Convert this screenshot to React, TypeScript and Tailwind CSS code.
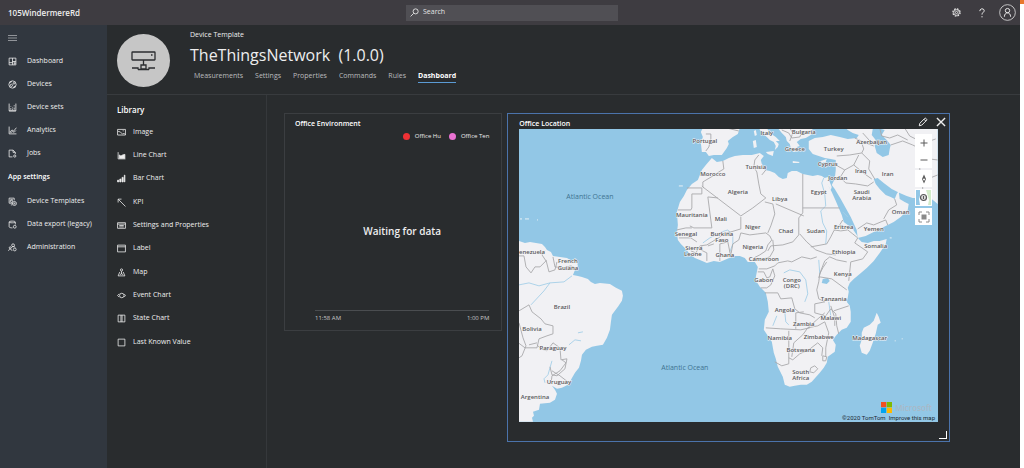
import type { ReactNode } from "react";

const ICONS: Record<string, ReactNode> = {
  dashboard: <path d="M2 2h12v12H2zM8 2v12M2 10h6M8 8h6M11 8v6M11 11h3" />,
  devices: (
    <>
      <circle cx="8" cy="8" r="6.5" />
      <circle cx="6" cy="9.5" r="2" />
      <circle cx="10.5" cy="6" r="1.5" />
      <path d="M3 5l4-2.5M9 13.5l4-3" />
    </>
  ),
  sets: <path d="M2 1v13h12V1M2 14h12M5 12V9M8 12v-2M11 12V8M5 6v1M8 7v1M11 4v2" />,
  analytics: <path d="M2 1v13h13M3 11l4-4 3 2 5-6M4 12l4-2 3 1 3-3" />,
  jobs: (
    <>
      <path d="M8 14H2V2h7l4 4v3M9 2v4h4" />
      <circle cx="12" cy="12.5" r="2" />
    </>
  ),
  templates: (
    <>
      <path d="M9 11H2V2h9v4M5 14h3M4 5h5" />
      <circle cx="6" cy="7.5" r="2" />
      <circle cx="11.5" cy="11.5" r="3.5" />
      <circle cx="11.5" cy="11.5" r="1" />
    </>
  ),
  dataExport: (
    <>
      <path d="M8 14c-3 0-6-.6-6-2V3.500c0-2 11-2 11 0V8M2 3.500c0 2 11 2 11 0" />
      <circle cx="12" cy="12" r="2.500" />
    </>
  ),
  admin: (
    <>
      <circle cx="9" cy="4" r="2.500" />
      <circle cx="4" cy="8.500" r="1.800" />
      <circle cx="12" cy="11.500" r="2.500" />
      <path d="M1 14c0-4 6-4 6 0M6 8c1-2 6-2 7 0" />
    </>
  ),
  image: <path d="M1 2.500h14v10H1zM2 6l4 1 4 4 2-2 3 3M10 5h2" />,
  line: (
    <>
      <path d="M2 2v12h13" />
      <path d="M4 13V7l3 2 3-2 4-1v7z" fill="currentColor" />
    </>
  ),
  bar: <path d="M1 14v-3h2v3zM5 14v-5h2v5zM9 14V6h2v8zM13 14V2h1v12z" fill="currentColor" />,
  kpi: <path d="M15 15L2 2M2 8V2h6" />,
  properties: <path d="M1 3h14v10H1zM1 5.500h14M4 8h8M4 10.500h8" />,
  label: <path d="M1 2h14v12H1zM1 5h14" />,
  map: (
    <>
      <circle cx="8" cy="3.500" r="2" />
      <path d="M8 5.500V11M5 7l-3 7h12l-3-7M5 12l3-2 3 2" />
    </>
  ),
  event: (
    <>
      <circle cx="8.500" cy="8" r="4" />
      <path d="M4 5L1 8l3 3M13 5.500L15 8l-2 2.500" />
    </>
  ),
  state: <path d="M2 2h12v12H2zM9 2v12M7 2v12" />,
  square: <path d="M2 2h12v12H2z" />,
};

function Icon({ name }: { name: string }) {
  return (
    <svg viewBox="0 0 16 16" className="size-[9px] shrink-0" fill="none" stroke="currentColor" strokeWidth="1.4" aria-hidden="true">
      {ICONS[name]}
    </svg>
  );
}

const NAV = [
  ["dashboard", "Dashboard"],
  ["devices", "Devices"],
  ["sets", "Device sets"],
  ["analytics", "Analytics"],
  ["jobs", "Jobs"],
];

const SETTINGS = [
  ["templates", "Device Templates"],
  ["dataExport", "Data export (legacy)"],
  ["admin", "Administration"],
];

const LIBRARY = [
  ["image", "Image"],
  ["line", "Line Chart"],
  ["bar", "Bar Chart"],
  ["kpi", "KPI"],
  ["properties", "Settings and Properties"],
  ["label", "Label"],
  ["map", "Map"],
  ["event", "Event Chart"],
  ["state", "State Chart"],
  ["square", "Last Known Value"],
];

const TABS = ["Measurements", "Settings", "Properties", "Commands", "Rules"];

function TopBar() {
  return (
    <header className="flex h-[25px] items-center justify-between bg-[#3e3c41] px-1">
      <a href="#" className="flex-1 pl-1 text-[8px] font-semibold">105WindermereRd</a>
      <label className="flex h-4 w-[212px] items-center gap-1 bg-[#504f54] px-1">
        <svg viewBox="0 0 16 16" className="size-[9px]" fill="none" stroke="currentColor" strokeWidth="1.5" aria-hidden="true">
          <circle cx="10" cy="6" r="4.500" />
          <path d="M6.500 9.500L1 15" />
        </svg>
        <input type="search" aria-label="Search" placeholder="Search" className="min-w-0 flex-1 bg-transparent text-[7px] outline-none placeholder:text-[#e4e4e4]" />
      </label>
      <div className="flex flex-1 items-center justify-end">
        <button aria-label="Settings" className="flex w-[26px] justify-center">
          <svg viewBox="0 0 16 16" className="size-[9px]" fill="none" stroke="currentColor" aria-hidden="true">
            <circle cx="8" cy="8" r="6.500" strokeWidth="2" strokeDasharray="3 2.100" />
            <circle cx="8" cy="8" r="5" strokeWidth="1.500" />
            <circle cx="8" cy="8" r="2" strokeWidth="1.500" />
          </svg>
        </button>
        <button aria-label="Help" className="flex w-[26px] justify-center">
          <svg viewBox="0 0 16 16" className="size-[10px]" fill="none" stroke="currentColor" strokeWidth="1.600" aria-hidden="true">
            <path d="M4.500 5c0-5 7-4.500 7-.8C11.500 7 8 7 8 10.500M8 13v2" />
          </svg>
        </button>
        <button aria-label="Account" className="pl-1">
          <svg viewBox="0 0 18 18" className="size-[17px]" fill="none" stroke="currentColor" aria-hidden="true">
            <circle cx="9" cy="9" r="8.300" strokeWidth="0.800" />
            <circle cx="9" cy="7" r="2.300" />
            <path d="M5.700 13.500c0-5.500 6.600-5.500 6.600 0" />
          </svg>
        </button>
      </div>
    </header>
  );
}

function NavItem({ icon, text }: { icon: string; text: string }) {
  return (
    <a href="#" className="flex h-[23px] items-center gap-[10px] whitespace-nowrap">
      <Icon name={icon} />
      {text}
    </a>
  );
}

function Sidebar() {
  return (
    <nav className="w-[107px] shrink-0 bg-[#31373f] pl-2">
      <button aria-label="Menu" className="flex h-[25px] w-full items-center">
        <svg viewBox="0 0 9 6" className="w-[9px]" stroke="#a9acb0" strokeWidth="0.800" aria-hidden="true">
          <path d="M0 .5h9M0 3h9M0 5.500h9" />
        </svg>
      </button>
      {NAV.map(([icon, text]) => (
        <NavItem key={text} icon={icon} text={text} />
      ))}
      <div className="flex h-[25px] items-center font-semibold text-white">App settings</div>
      {SETTINGS.map(([icon, text]) => (
        <NavItem key={text} icon={icon} text={text} />
      ))}
    </nav>
  );
}

function TemplateHeader() {
  return (
    <div className="flex h-[70px] gap-[20px] border-b border-[#383b3e] pt-[9px] pl-[10px]">
      <div className="flex size-[53px] shrink-0 items-center justify-center rounded-full bg-[#c6c6c6]">
        <svg viewBox="0 0 25 20" className="w-[25px]" fill="none" stroke="#2b2d30" strokeWidth="1.300" aria-hidden="true">
          <rect x="1" y="1" width="23" height="8" rx="0.500" />
          <path d="M20 4h1.500M12.500 9v5M10 14h5v4h-5zM7 18.500h11M1 17h6v1.500M18 18.500V17h6" />
        </svg>
      </div>
      <div>
        <div className="text-[7px] leading-[10px] -mt-1">Device Template</div>
        <h1 className="pt-1 text-[16px] leading-[22px] whitespace-pre">TheThingsNetwork  (1.0.0)</h1>
        <div className="flex gap-3 pt-[5px] pl-1 text-[7px] leading-[10px] text-[#bcbdbf]">
          {TABS.map((tab) => (
            <a key={tab} href="#">{tab}</a>
          ))}
          <a href="#" className="border-b border-[#5b9bd5] pb-px font-bold text-white">Dashboard</a>
        </div>
      </div>
    </div>
  );
}

function Library() {
  return (
    <aside className="w-40 shrink-0 border-r border-[#35383b] pt-[9px] pl-[10px]">
      <h2 className="text-[8px] leading-[12px] font-semibold text-white">Library</h2>
      <ul className="pt-1">
        {LIBRARY.map(([icon, text]) => (
          <li key={text} className="nth-[3n+1]:pt-px">
            <button className="flex h-[23px] items-center gap-[7px]">
              <Icon name={icon} />
              {text}
            </button>
          </li>
        ))}
      </ul>
    </aside>
  );
}

function EnvironmentCard() {
  return (
    <section className="flex h-[218px] flex-col border border-[#3b3e41] pt-[5px] pr-3 pb-[7px] pl-[10px]">
      <h3 className="text-[7px] leading-[10px] font-semibold text-white">Office Environment</h3>
      <div className="flex justify-end gap-2 pt-[2px] text-[6px] leading-[10px]">
        <span className="flex items-center gap-[5px]">
          <span className="size-[7px] rounded-full bg-[#ee3135]" />
          <span className="whitespace-nowrap">Office Hu</span>
        </span>
        <span className="flex items-center gap-[5px]">
          <span className="size-[7px] rounded-full bg-[#ea72d2]" />
          <span className="whitespace-nowrap">Office Ten</span>
        </span>
      </div>
      <div className="flex flex-1 items-center justify-center pt-3 pl-5 text-[10px] font-semibold">Waiting for data</div>
      <div className="ml-5 flex justify-between border-t border-[#4a4d50] pt-[3px] text-[6px] leading-[9px] text-[#c6c7c8]">
        <span>11:58 AM</span>
        <span>1:00 PM</span>
      </div>
    </section>
  );
}

const LAND = [
  // South America
  "M519 241L522 242 525 243 530 242 536 243 542 244 545 247 547 250 551 252 553 256 560 257 567 258 572 261 577 262 578 266 575 270 573 275 578 276 582 277 588 279 591 282 595 284 600 283 610 284 616 288 622 291 623 296 622 301 618 307 612 315 611 322 610 330 607 338 603 345 597 346 592 347 586 350 582 355 581 361 579 368 575 373 571 380 568 385 562 388 557 389 552 386 555 390 557 394 555 400 550 403 540 404 539 410 533 412 534 416 532 418 533 422 519 422z",
  // Africa
  "M712 158L717 162 723 161 729 158 735 156 743 155 752 155 760 153 764 156 761 160 762 164 765 170 770 171 775 173 779 177 783 179 787 178 788 173 792 171 797 171 803 174 813 176 818 175 822 176 825 178 828 177 830 182 832 187 831 190 827 183 832 192 836 201 839 208 842 215 844 222 848 225 853 229 857 235 859 239 862 242 868 243 874 241 880 241 887 239 886 244 880 253 874 261 867 268 860 274 854 279 850 283 848 288 849 292 848 298 847 302 850 306 851 312 851 322 847 328 842 330 837 335 833 340 836 345 835 352 828 357 827 363 824 368 820 373 812 382 807 385 801 385 795 386 790 387 785 385 783 377 778 367 776 359 774 353 772 342 768 336 764 330 765 320 769 312 768 302 766 293 760 287 757 282 756 277 758 267 755 262 748 262 745 258 740 256 734 256 727 259 720 262 714 261 707 263 700 260 695 258 690 254 685 248 681 244 678 240 677 233 678 225 677 212 680 202 684 196 687 190 692 184 698 180 702 170 706 165z",
  // Iberia
  "M703 128L701 132 703 137 701 143 702 152 706 152 709 156 714 155 722 155 727 148 729 144 728 141 733 137 738 134 740 128z",
  "M754 131l2-1 1 5-2 1zM753 141l3-1 1 7-3 1z",
  // Italy and Sicily
  "M759 128l3 5 5 4 3 3 4 2 2 4-1 4 3-3 1-3-3-3 4 0-4-4-6-4-3-5zM766 152l8-1-1 5-5-2z",
  // Greece and the Balkans
  "M778 128L782 133 786 137 787 141 790 144 791 148 794 152 798 151 797 147 800 146 797 142 801 139 806 138 811 135 813 128zM793 161l7 1-1 1-6 0z",
  // Turkey, Caucasus, Arabia, Iran
  "M809 141L815 138 823 137 831 135 840 137 848 139 857 138 859 135 853 133 848 130 846 128 938 128 938 204 932 199 922 198 913 198 907 196 900 193 892 189 884 183 878 178 874 179 876 184 880 189 886 195 891 197 895 199 897 194 899 191 900 199 905 202 909 204 908 210 901 217 894 222 886 226 876 231 866 236 858 238 857 230 851 217 846 208 841 199 835 189 832 185 835 179 836 170 836 160 831 159 825 158 819 156 813 154 809 149z",
  // Madagascar
  "M877 313L879 317 881 323 878 325 876 334 873 343 870 351 867 355 862 353 860 346 862 340 862 333 864 328 870 325 874 321z",
  "M821 161l6-2-1 3-4 1z",
];

const BORDERS = [
  // North and West Africa
  "M723 161l1 8-5 3-6 4-10 6 0 5 38 29 12-8 13-10-5-4-2-10-2-12-3-5 1-7 4-5M762 175l4-5M687 188h15v6h-10v14l-1 2h-13M702 186l2 2M718 198l-10-1 4 31h-18l-4-2M741 217l0 12-10 3-6 1-5 4-8 5-5 3-7 1-4 7-5-2M702 246l-1 4 6 3 0 8M714 244l-6 2M720 261l0-17 8-2 3 15M731 255l2-11 6-4M739 240l2-7 9 2 8-1 8-1 4 3 2 4-4 5-2 6-6 4-6 3M765 202l8 2 2 10-4 12-3 7M776 204l28 12M803 174l0 39-4 5v17l-6 7-10 3-12 1-3 5M803 208l37 0M773 240l1 10-4 7-6 2M759 269l8 0 8-3 3-3 10-2 4 1 10-5 9 2 6-2M800 234l7 8 9 8 11 4 9 1M811 247l16-3 4-7 3-6 6-6 3-5M834 230l7 1 7-1 5 4 5 4-3 5 13 9-5 7-12 3-2 19M847 262l-10-2-7-3-5 4-4 10-2 7M677 230l9-2 6 0M679 238l12 0 6 4",
  // Central and Southern Africa
  "M758 272h6l3 6 3-1 3-8 2 7-4 9-4 3-6 0M765 293h13l3 6 11-1 3 11 5 4 10 2 5 3M766 328l15 1 20 1 9-2M789 331l0 33-7 2-7-4M789 358l4 2 7-6 9-4 9-7 5 5-1 8M796 329l0-16 8-1M827 262l-4 6-3 6-1 8-2 8 2 9 6 3-10 2 0 9 11 3 5-7 5 5 1 12 2 8M820 277l12 2 15 11M834 311l15-5M825 313l-8 7-9 8-5 7-9 8-2 14M808 328l10-2 7-4 4 11-3 15 0 9M831 306l4 12 0 8M811 368l4-2 3 3-4 4-4-1zM823 356l4 1-1 4-3 0z",
  // South America
  "M519 256l5 0 2 11 5 6 4-6 5 0 6-6-4-6 3-4M546 260l3 12 6-2 2-8M553 257l2 10 8 1 8-2 4 2M519 311l10-6 3 7 9 7 4 5 8 2 0 8-6 2-8 3-2 9-12 0-8-6M537 345l4 4 6 2 6-8 7 5 1 12 6-1-2 10-8 7-5-1-2-8M519 323l4 15 3 8-4 10-3 2M529 345l8-2M552 371l8 5 9 7M562 360l4 3-6 8-8 5-1 8",
  // Middle East and Europe
  "M837 156l13-1 12-2 2-4-2-6M836 165l9 5 9-5 5-10M845 170l-5 8-6 2M854 165l11 9 7 5M862 153l8 8-1 8 6 10M840 177l6 6 10 1 12 2 6-4M858 229l9-6 7 2 12-5 2 5M895 199l2 6-8 5-5 9M855 138l11 5 8 3M863 133l9 10M891 145l12-4 10 4 8 4 1 12-2 8 3 12 0 14M880 128l2 8 8 2 8-3 10 5M922 158l16 2M923 181l15-6M905 128l5 8 14 7 12-4M706 134l5 0 0 5-2 8-3 4M727 128l12 3M782 130l7 3 3 5 8-1 2-5 11-1M790 128l3 5-3 8",
];

const WATER = [
  "M873 129l5-1 7 2-3 5 5 5 4 5-1 4-1 6-6 2-6-4-2-7 1-6-4-5z",
  "M823 279l5-1 2 3-3 3-5-1z",
];

const RIVERS =
  "M826 244l1-13-4-8-2-12 5-5-1-12-3-11 2-5M703 243l7-5 12-6 6-2 5 6 0 8-3 8M784 273l6-3 10 2 6 8 2 14-3 8M519 285l10-2 10 3 11-3 14-1 8-6M550 283l-6 8-13 14M552 361l-4 14-4 4 1 4M829 302l2 14M777 316l-4 10M785 312l1 10 3 3M569 345l6-5 6 1M578 333l5-1M819 260l1 14M843 212l5 5";

const PLACES: [string, number, number][] = [
  ["Portugal", 705, 143], ["Italy", 767, 135], ["Bulgaria", 804, 134], ["Greece", 795, 151],
  ["Turkey", 834, 151], ["Azerbaijan", 872, 144], ["Tunisia", 756, 169], ["Cyprus", 828, 166],
  ["Morocco", 713, 176], ["Algeria", 738, 194], ["Libya", 780, 201], ["Egypt", 819, 194],
  ["Jordan", 838, 180], ["Iraq", 861, 173], ["Iran", 888, 176], ["Saudi", 862, 194], ["Arabia", 862, 200],
  ["Oman", 901, 214], ["Yemen", 874, 231], ["Mauritania", 692, 217], ["Mali", 721, 221],
  ["Niger", 753, 229], ["Chad", 786, 233], ["Sudan", 816, 233], ["Eritrea", 844, 229],
  ["Senegal", 686, 236], ["Burkina", 722, 236], ["Faso", 722, 242], ["Sierra", 694, 250], ["Leone", 693, 256],
  ["Ghana", 725, 257], ["Nigeria", 753, 249], ["Cameroon", 764, 261], ["Ethiopia", 844, 254],
  ["Somalia", 876, 248], ["Kenya", 843, 276], ["Gabon", 764, 282], ["Congo", 792, 282], ["(DRC)", 792, 288],
  ["Tanzania", 834, 301], ["Angola", 785, 312], ["Malawi", 831, 320], ["Zambia", 804, 326],
  ["Namibia", 780, 340], ["Zimbabwe", 819, 339], ["Botswana", 801, 352], ["Madagascar", 870, 340],
  ["South", 801, 374], ["Africa", 801, 380], ["enezuela", 532, 254], ["French", 568, 263], ["Guiana", 568, 270],
  ["Brazil", 562, 309], ["Bolivia", 532, 331], ["Paraguay", 553, 350], ["Uruguay", 559, 384], ["Argentina", 535, 399],
];

function AfricaMap() {
  return (
    <svg viewBox="519 129 419 293" className="block w-full" role="img" aria-label="Map">
      <rect x="519" y="129" width="419" height="293" fill="#92c7e6" />
      <g fill="#f1f1f4">
        {LAND.map((d) => (
          <path key={d} d={d} />
        ))}
      </g>
      <g fill="#92c7e6">
        {WATER.map((d) => (
          <path key={d} d={d} />
        ))}
      </g>
      <path d={RIVERS} fill="none" stroke="#a5cfe8" strokeWidth="0.900" />
      <g fill="none" stroke="#a9a9ab" strokeWidth="0.900" strokeLinejoin="round">
        {BORDERS.map((d) => (
          <path key={d} d={d} />
        ))}
      </g>
      <path d="M520 219h2M525 219h4M537 220h1M679 186h4M895 341h1M902 339h1M890 238h2" stroke="#e8f1f6" />
      <g className="text-[6px] font-semibold" fill="#58585b" stroke="#f4f4f6" strokeWidth="1" paintOrder="stroke" textAnchor="middle">
        {PLACES.map(([name, x, y]) => (
          <text key={name} x={x} y={y}>{name}</text>
        ))}
      </g>
      <g className="text-[7px]" fill="#3f7391" textAnchor="middle">
        <text x="590" y="199">Atlantic Ocean</text>
        <text x="685" y="370">Atlantic Ocean</text>
      </g>
    </svg>
  );
}

function MapControls() {
  return (
    <div className="absolute top-[5px] right-[6px] flex w-[17px] flex-col gap-[2px] text-[#5a5a5a] *:flex *:h-[17px] *:items-center *:justify-center *:bg-white">
      <button aria-label="Zoom in">
        <svg viewBox="0 0 16 16" className="size-4" fill="none" stroke="currentColor"><path d="M8 4.500v7M4.500 8h7" /></svg>
      </button>
      <button aria-label="Zoom out" className="-mt-[2px]">
        <svg viewBox="0 0 16 16" className="size-4" fill="none" stroke="currentColor"><path d="M4.500 8h7" /></svg>
      </button>
      <button aria-label="Pitch">
        <svg viewBox="0 0 16 16" className="size-4"><path d="M8 3.500L10 8 8 12.500 6 8z" fill="currentColor" /><circle cx="8" cy="8.500" r="1" fill="#fff" /></svg>
      </button>
      <button aria-label="Map style">
        <svg viewBox="0 0 17 17" className="size-[17px]">
          <path d="M1 1h4v6l-1 3 1 6H1z" fill="#92c7e6" />
          <path d="M11 1h5v15h-3l1-5z" fill="#d3ecc9" />
          <circle cx="8.500" cy="8.500" r="3" fill="#dcdcdc" stroke="currentColor" strokeWidth="1.200" />
          <path d="M8.500 7v3" stroke="currentColor" />
        </svg>
      </button>
      <button aria-label="Center map">
        <svg viewBox="0 0 16 16" className="size-4" fill="none" stroke="#8a8a8a">
          <path d="M3 6V3h3M10 3h3v3M13 10v3h-3M6 13H3v-3" />
          <rect x="6" y="6" width="4" height="4" fill="#8a8a8a" />
        </svg>
      </button>
    </div>
  );
}

function LocationCard() {
  return (
    <section className="relative border border-[#4b73ab] pt-[5px] pr-[11px] pb-[19px] pl-[11px]">
      <div className="flex h-[10px] items-center justify-between">
        <h3 className="text-[7px] leading-[10px] font-semibold text-white">Office Location</h3>
        <div className="-mt-1 -mr-2 flex gap-2">
          <button aria-label="Edit">
            <svg viewBox="0 0 16 16" className="size-[10px]" fill="none" stroke="currentColor" strokeWidth="1.600">
              <path d="M2 14l1-4 8-8c1-1 4 2 3 3l-8 8zM9.500 3.500l3 3" />
            </svg>
          </button>
          <button aria-label="Remove">
            <svg viewBox="0 0 16 16" className="size-[10px]" fill="none" stroke="currentColor" strokeWidth="2.200"><path d="M1.500 1.500l13 13M14.500 1.500l-13 13" /></svg>
          </button>
        </div>
      </div>
      <div className="relative overflow-hidden bg-[#92c7e6]">
        <AfricaMap />
        <MapControls />
        <div className="absolute right-[3px] bottom-0 flex flex-col items-end">
          <div className="flex items-center gap-[3px] pr-[3px] text-[8px] leading-[12px] font-semibold text-[#a9b9c6]">
            <svg viewBox="0 0 23 23" className="size-[11px]" aria-hidden="true">
              <path d="M0 0h11v11H0z" fill="#f25022" />
              <path d="M12 0h11v11H12z" fill="#7fba00" />
              <path d="M0 12h11v11H0z" fill="#00a4ef" />
              <path d="M12 12h11v11H12z" fill="#ffb900" />
            </svg>
            Microsoft
          </div>
          <div className="flex gap-[3px] font-[Roboto,sans-serif] text-[6px] leading-[8px] text-[#1d2a33]">
            <span>©2020 TomTom</span>
            <a href="#">Improve this map</a>
          </div>
        </div>
      </div>
      <div className="absolute right-[2px] bottom-[2px] size-2 border-r border-b border-white" />
    </section>
  );
}

export default function App() {
  return (
    <div className="flex min-h-screen bg-white font-['Open_Sans','Noto_Sans',sans-serif] text-[7px] text-[#eeeeee]">
      <div className="flex min-w-0 flex-1 flex-col bg-[#292c2e]">
        <TopBar />
        <div className="flex flex-1">
          <Sidebar />
          <main className="flex min-w-0 flex-1 flex-col">
            <TemplateHeader />
            <div className="flex flex-1">
              <Library />
              <div className="grid flex-1 grid-cols-[218fr_442fr] items-start gap-[5px] pt-[18px] pr-[70px] pb-6 pl-[17px]">
                <EnvironmentCard />
                <LocationCard />
              </div>
            </div>
          </main>
        </div>
      </div>
      <div className="w-1 shrink-0 border-t-4 border-[#e8762c]" />
    </div>
  );
}
